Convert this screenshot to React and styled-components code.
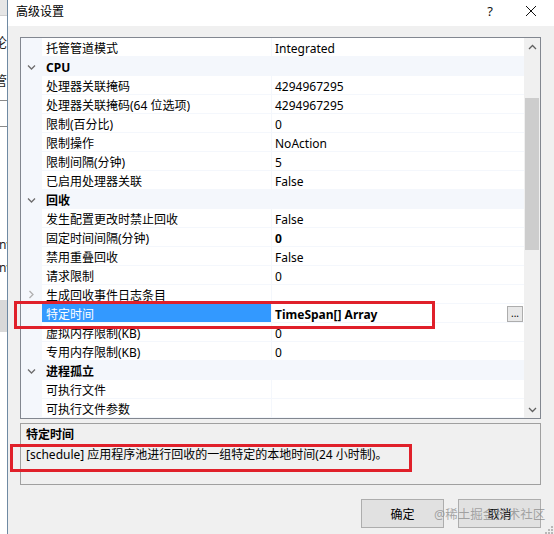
import React from "react";
import styled, { createGlobalStyle } from "styled-components";

const LINE = "#f4f7fc";

const GlobalStyle = createGlobalStyle`
  html, body {
    margin: 0;
    padding: 0;
    background: #f0f0f0;
  }
  body {
    font-family: "Noto Sans", "Noto Sans CJK SC", sans-serif;
    font-size: 12px;
    color: #000;
  }
`;

const rows = [
  { label: "托管管道模式", value: "Integrated" },
  { category: "CPU" },
  { label: "处理器关联掩码", value: "4294967295" },
  { label: "处理器关联掩码(64 位选项)", value: "4294967295" },
  { label: "限制(百分比)", value: "0" },
  { label: "限制操作", value: "NoAction" },
  { label: "限制间隔(分钟)", value: "5" },
  { label: "已启用处理器关联", value: "False" },
  { category: "回收" },
  { label: "发生配置更改时禁止回收", value: "False" },
  { label: "固定时间间隔(分钟)", value: "0", bold: true },
  { label: "禁用重叠回收", value: "False" },
  { label: "请求限制", value: "0" },
  { label: "生成回收事件日志条目", value: "", collapsed: true },
  { label: "特定时间", value: "TimeSpan[] Array", bold: true, selected: true },
  { label: "虚拟内存限制(KB)", value: "0" },
  { label: "专用内存限制(KB)", value: "0" },
  { category: "进程孤立" },
  { label: "可执行文件", value: "" },
  { label: "可执行文件参数", value: "" },
];

function Chevron({ down }) {
  return (
    <svg width="9" height="9" viewBox="0 0 9 9">
      <path
        d={down ? "M1 2.5 L4.5 6 L8 2.5" : "M2.5 1 L6 4.5 L2.5 8"}
        fill="none"
        stroke={down ? "#6d6d6d" : "#b0b0b0"}
        strokeWidth="1.3"
      />
    </svg>
  );
}

function App() {
  return (
    <Page>
      <GlobalStyle />
      <BackWindow>
        <BackTop />
        <BackGlyph $top={32}>论</BackGlyph>
        <BackGlyph $top={70}>管</BackGlyph>
        <BackLine $top={100} />
        <BackLine $top={126} />
        <BackGlyph $top={236} $latin>nv</BackGlyph>
        <BackGlyph $top={259} $latin>nv</BackGlyph>
        <BackBlock />
      </BackWindow>

      <Dialog>
        <TitleBar>
          <Title>高级设置</Title>
          <TitleButtons>
            <Help>?</Help>
            <svg width="12" height="12" viewBox="0 0 12 12">
              <path d="M1 1 L11 11 M11 1 L1 11" stroke="#111" strokeWidth="1" />
            </svg>
          </TitleButtons>
        </TitleBar>

        <Body>
          <Grid>
            <Rows>
              {rows.map((r, i) =>
                r.category ? (
                  <CategoryRow key={i}>
                    <Margin>
                      <Chevron down />
                    </Margin>
                    <CategoryLabel>{r.category}</CategoryLabel>
                  </CategoryRow>
                ) : (
                  <Row key={i}>
                    <Margin>{r.collapsed && <Chevron />}</Margin>
                    <Label $selected={r.selected}>{r.label}</Label>
                    <Value $bold={r.bold}>
                      <span>{r.value}</span>
                      {r.selected && <DotsButton>...</DotsButton>}
                    </Value>
                  </Row>
                )
              )}
            </Rows>
            <Scrollbar>
              <ScrollArrow>
                <svg width="9" height="6" viewBox="0 0 9 6">
                  <path d="M1 5 L4.5 1.5 L8 5" fill="none" stroke="#606060" strokeWidth="1.3" />
                </svg>
              </ScrollArrow>
              <Track>
                <Thumb />
              </Track>
              <ScrollArrow>
                <svg width="9" height="6" viewBox="0 0 9 6">
                  <path d="M1 1 L4.5 4.5 L8 1" fill="none" stroke="#606060" strokeWidth="1.3" />
                </svg>
              </ScrollArrow>
            </Scrollbar>
          </Grid>

          <Description>
            <DescTitle>特定时间</DescTitle>
            <DescText>[schedule] 应用程序池进行回收的一组特定的本地时间(24 小时制)。</DescText>
          </Description>

          <Buttons>
            <Button>确定</Button>
            <Button>取消</Button>
          </Buttons>
        </Body>
      </Dialog>

      <Highlight $left={14} $top={301} $width={421} $height={28} />
      <Highlight $left={10} $top={444} $width={402} $height={28} />
      <Watermark>@稀土掘金技术社区</Watermark>
      <Grip>
        <svg width="12" height="12" viewBox="0 0 12 12">
          {[
            [9, 3],
            [6, 6],
            [9, 6],
            [3, 9],
            [6, 9],
            [9, 9],
          ].map(([x, y]) => (
            <rect key={`${x}-${y}`} x={x} y={y} width="2" height="2" fill="#b8b8b8" />
          ))}
        </svg>
      </Grip>
    </Page>
  );
}

const Page = styled.div`
  position: relative;
  display: flex;
  width: 554px;
  height: 534px;
  overflow: hidden;
`;

const BackWindow = styled.div`
  position: relative;
  width: 7px;
  flex-shrink: 0;
  background: #fff;
  border-right: 1px solid #6f8aa3;
  overflow: hidden;
`;

const BackTop = styled.div`
  height: 15px;
  background: #e6e6e6;
  border-bottom: 1px solid #d0d0d0;
`;

const BackGlyph = styled.div`
  position: absolute;
  top: ${(p) => p.$top}px;
  left: ${(p) => (p.$latin ? -1 : -6)}px;
  font-size: ${(p) => (p.$latin ? 12 : 13)}px;
  white-space: nowrap;
  color: #222;
`;

const BackLine = styled.div`
  position: absolute;
  top: ${(p) => p.$top}px;
  left: 0;
  right: 0;
  height: 1px;
  background: #8a8a8a;
`;

const BackBlock = styled.div`
  position: absolute;
  top: 300px;
  left: 0;
  right: 0;
  height: 32px;
  background: #d9d9d9;
`;

const Dialog = styled.div`
  flex: 1;
  display: flex;
  flex-direction: column;
  background: #f0f0f0;
`;

const TitleBar = styled.div`
  height: 26px;
  background: #fff;
  display: flex;
  align-items: center;
  justify-content: space-between;
  padding: 0 17px 0 8px;
`;

const Title = styled.div`
  font-size: 12px;
  margin-top: -4px;
`;

const TitleButtons = styled.div`
  display: flex;
  align-items: center;
  gap: 32px;
  margin-top: -4px;
`;

const Help = styled.span`
  font-size: 13px;
  color: #111;
`;

const Body = styled.div`
  padding: 11px 13px 0 12px;
  display: flex;
  flex-direction: column;
`;

const Grid = styled.div`
  display: flex;
  height: 380px;
  border: 1px solid #828790;
  background: #fff;
`;

const Rows = styled.div`
  flex: 1;
  display: flex;
  flex-direction: column;
`;

const Row = styled.div`
  display: grid;
  grid-template-columns: 21px 230px 1fr;
  height: 19px;
  box-sizing: border-box;
  border-bottom: 1px solid ${LINE};
`;

const CategoryRow = styled.div`
  display: flex;
  height: 19px;
  box-sizing: border-box;
  background: ${LINE};
`;

const Margin = styled.div`
  width: 21px;
  background: ${LINE};
  display: flex;
  align-items: center;
  justify-content: center;
  padding-top: 1px;
`;

const CategoryLabel = styled.div`
  padding: 3px 0 0 4px;
  font-weight: bold;
  line-height: 16px;
`;

const Label = styled.div`
  padding: 3px 0 0 4px;
  line-height: 15px;
  white-space: nowrap;
  overflow: hidden;
  background: ${(p) => (p.$selected ? "#3399ff" : "transparent")};
  color: ${(p) => (p.$selected ? "#fff" : "#000")};
  border-right: 1px solid ${LINE};
`;

const Value = styled.div`
  display: flex;
  align-items: center;
  justify-content: space-between;
  padding: 3px 1px 0 3px;
  line-height: 15px;
  font-weight: ${(p) => (p.$bold ? "bold" : "normal")};
  white-space: nowrap;
`;

const DotsButton = styled.div`
  width: 14px;
  height: 14px;
  margin-top: -2px;
  border: 1px solid #adadad;
  background: #e8e8e8;
  font-size: 10px;
  font-weight: normal;
  line-height: 12px;
  text-align: center;
`;

const Scrollbar = styled.div`
  width: 16px;
  background: #f0f0f0;
  display: flex;
  flex-direction: column;
`;

const ScrollArrow = styled.div`
  height: 17px;
  display: flex;
  align-items: center;
  justify-content: center;
`;

const Track = styled.div`
  flex: 1;
  display: flex;
  flex-direction: column;
`;

const Thumb = styled.div`
  margin-top: 43px;
  height: 152px;
  margin-left: 1px;
  width: 14px;
  background: #cdcdcd;
`;

const Description = styled.div`
  margin-top: 4px;
  height: 56px;
  border: 1px solid #a0a0a0;
  padding: 2px 5px;
`;

const DescTitle = styled.div`
  font-weight: bold;
  line-height: 18px;
`;

const DescText = styled.div`
  margin-top: 2px;
  line-height: 18px;
`;

const Buttons = styled.div`
  margin-top: 14px;
  display: flex;
  justify-content: flex-end;
  gap: 14px;
`;

const Button = styled.div`
  width: 81px;
  height: 27px;
  border: 1px solid #adadad;
  background: #e1e1e1;
  display: flex;
  align-items: center;
  justify-content: center;
  font-size: 12px;
`;

const Highlight = styled.div`
  position: absolute;
  left: ${(p) => p.$left}px;
  top: ${(p) => p.$top}px;
  width: ${(p) => p.$width}px;
  height: ${(p) => p.$height}px;
  box-sizing: border-box;
  border: 3px solid #e0202a;
  pointer-events: none;
`;

const Watermark = styled.div`
  position: absolute;
  left: 434px;
  top: 504px;
  font-size: 12.5px;
  color: rgba(140, 140, 140, 0.75);
  white-space: nowrap;
  pointer-events: none;
`;

const Grip = styled.div`
  position: absolute;
  right: 0;
  bottom: 0;
  width: 12px;
  height: 12px;
`;

export default App;
